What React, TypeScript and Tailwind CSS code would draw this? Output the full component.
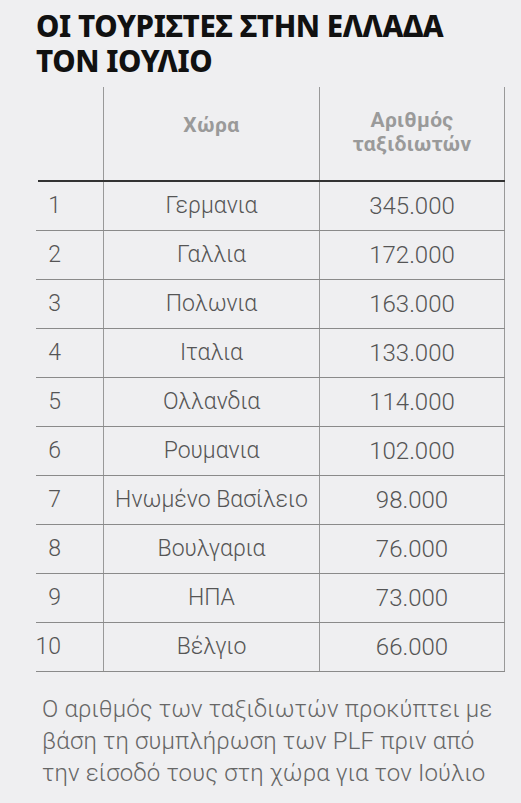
const rows: [string, string][] = [
  ['Γερμανια', '345.000'],
  ['Γαλλια', '172.000'],
  ['Πολωνια', '163.000'],
  ['Ιταλια', '133.000'],
  ['Ολλανδια', '114.000'],
  ['Ρουμανια', '102.000'],
  ['Ηνωμένο Βασίλειο', '98.000'],
  ['Βουλγαρια', '76.000'],
  ['ΗΠΑ', '73.000'],
  ['Βέλγιο', '66.000'],
];

export default function App() {
  return (
    <div className="w-[521px] h-[803px] bg-[#efeff1] overflow-hidden font-['Roboto',sans-serif]">
      <h1 className="pl-[36px] pt-[8px] text-[29.5px] leading-[35px] font-extrabold text-[#111] tracking-[-0.4px] font-['Noto_Sans',sans-serif]">
        ΟΙ ΤΟΥΡΙΣΤΕΣ ΣΤΗΝ ΕΛΛΑΔΑ
        <br />
        ΤΟΝ ΙΟΥΛΙΟ
      </h1>

      <div className="mt-[9px] ml-[36px] w-[469px]">
        <div className="flex h-[95px] border-b-2 border-[#333] ml-[2px]">
          <div className="w-[66px] border-r border-[#999]" />
          <div className="w-[216px] border-r border-[#999] flex items-center justify-center text-[21px] tracking-[0.5px] font-bold text-[#9a9a9a] pb-[16px]">
            Χώρα
          </div>
          <div className="flex-1 border-r border-[#999] flex items-center justify-center text-center text-[21px] leading-[24px] tracking-[0.3px] font-bold text-[#9a9a9a] pb-[4px]">
            Αριθμός
            <br />
            ταξιδιωτών
          </div>
        </div>

        {rows.map(([country, count], i) => (
          <div key={country} className="flex h-[49px] border-b border-[#8a8a8a] text-[23px] font-light text-[#555]">
            <div className="w-[68px] border-r border-[#999] flex items-center justify-end pr-[42px]">{i + 1}</div>
            <div className="w-[216px] border-r border-[#999] flex items-center justify-center">{country}</div>
            <div className="flex-1 border-r border-[#999] flex items-center justify-center text-[24px]">{count}</div>
          </div>
        ))}
      </div>

      <p className="mt-[21px] pl-[42px] text-[24px] leading-[32px] tracking-[0.15px] font-light text-[#666] whitespace-nowrap">
        Ο αριθμός των ταξιδιωτών προκύπτει με
        <br />
        βάση τη συμπλήρωση των PLF πριν από
        <br />
        την είσοδό τους στη χώρα για τον Ιούλιο
      </p>
    </div>
  );
}
